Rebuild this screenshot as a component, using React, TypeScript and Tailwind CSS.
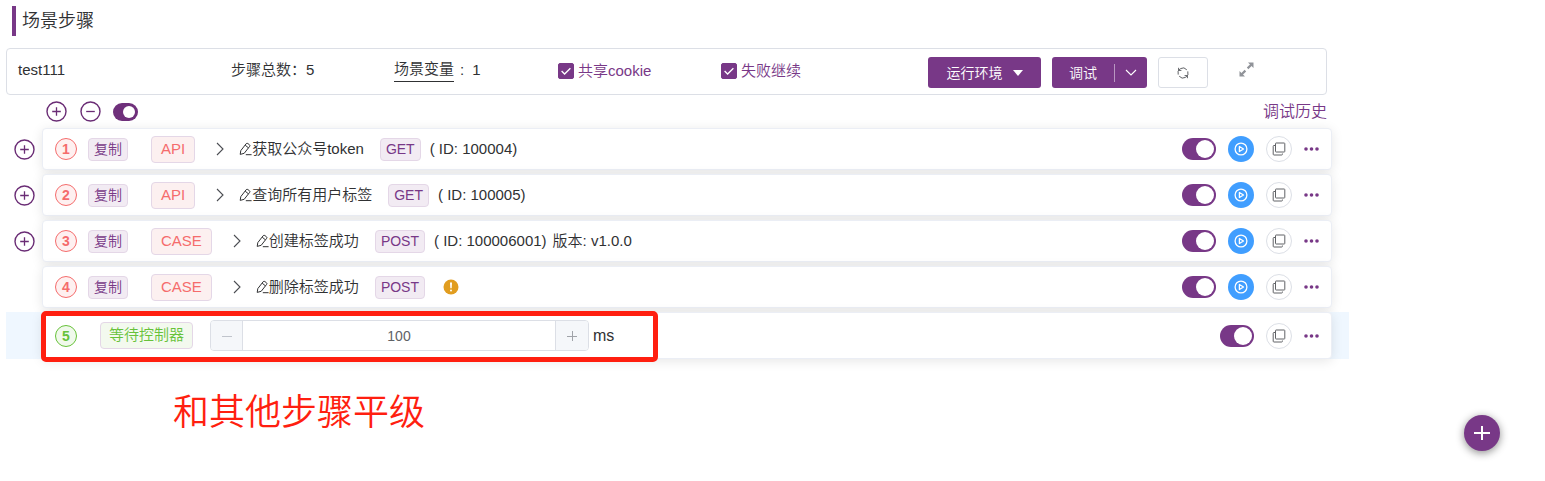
import { useState } from "react";

type Step = {
  id: number;
  kind: "API" | "CASE";
  name: string;
  method: "GET" | "POST";
  ref?: string;
  version?: string;
  insertable: boolean;
};

const STEPS: Step[] = [
  { id: 1, kind: "API", name: "获取公众号token", method: "GET", ref: "100004", insertable: true },
  { id: 2, kind: "API", name: "查询所有用户标签", method: "GET", ref: "100005", insertable: true },
  { id: 3, kind: "CASE", name: "创建标签成功", method: "POST", ref: "100006001", version: "v1.0.0", insertable: true },
  { id: 4, kind: "CASE", name: "删除标签成功", method: "POST", insertable: false },
];

function CircleIcon({ minus = false }: { minus?: boolean }) {
  return (
    <svg viewBox="0 0 21 21" className="size-[21px]" fill="none" stroke="#6a2c75">
      <circle cx="10.5" cy="10.5" r="9.5" strokeWidth="1.4" />
      <path d={minus ? "M6.2 10.5h8.6" : "M6.2 10.5h8.6M10.5 6.2v8.6"} strokeWidth="1.3" />
    </svg>
  );
}

function PencilIcon() {
  return (
    <svg viewBox="0 0 13 14" className="h-[14px] w-[13px] shrink-0" fill="none" stroke="#303133" strokeWidth="1">
      <path d="M1.2 12.4 1.8 8.6 7.2 1.7Q7.9 .9 8.8 1.5L10.5 2.8Q11.3 3.5 10.7 4.3L5.2 11.3 1.2 12.4ZM6.2 3.2 9.4 5.8M6.8 12.7H12.6" />
    </svg>
  );
}

function ChevronIcon() {
  return (
    <svg viewBox="0 0 8 14" className="h-[14px] w-2" fill="none" stroke="#4b4d52" strokeWidth="1.1">
      <path d="M1 1 7 7 1 13" />
    </svg>
  );
}

function PlayIcon() {
  return (
    <svg viewBox="0 0 14 14" className="size-[14px]" fill="none" stroke="white" strokeWidth="1.3">
      <circle cx="7" cy="7" r="5.9" />
      <path d="M5.4 4.5v5L9.5 7z" strokeLinejoin="round" />
    </svg>
  );
}

function CopyIcon() {
  return (
    <svg viewBox="0 0 14 14" className="size-[14px]" fill="none" stroke="#606266" strokeWidth="1">
      <rect x="3.5" y="1" width="9.3" height="9" rx="0.6" />
      <path d="M3.2 3.5H2Q1.2 3.5 1.2 4.3V12.3Q1.2 13 2 13H9.7Q10.4 13 10.4 12.3V11.5" />
    </svg>
  );
}

function Switch({ label, small = false }: { label: string; small?: boolean }) {
  return (
    <input
      type="checkbox"
      role="switch"
      aria-label={label}
      defaultChecked
      className={
        small
          ? "flex h-[18px] w-[25px] shrink-0 cursor-pointer appearance-none items-center justify-start rounded-full bg-gray-300 px-[3px] before:block before:size-3 before:rounded-full before:bg-white checked:justify-end checked:bg-[#6f307b]"
          : "flex h-[22px] w-[34px] shrink-0 cursor-pointer appearance-none items-center justify-start rounded-full bg-gray-300 px-[2px] before:block before:size-[18px] before:rounded-full before:bg-white checked:justify-end checked:bg-[#783887]"
      }
    />
  );
}

function CheckOption({ label }: { label: string }) {
  return (
    <label className="flex items-center gap-1 pt-px text-[#783887]">
      <span className="grid">
        <input
          type="checkbox"
          defaultChecked
          className="col-start-1 row-start-1 size-4 appearance-none rounded-xs border border-[#783887] bg-white checked:bg-[#783887]"
        />
        <svg
          viewBox="0 0 16 16"
          className="pointer-events-none col-start-1 row-start-1 size-4"
          fill="none"
          stroke="white"
          strokeWidth="1.3"
        >
          <path d="M3.6 8 6.6 11 12.4 5.2" />
        </svg>
      </span>
      {label}
    </label>
  );
}

function RowActions({ id, runnable }: { id: number; runnable: boolean }) {
  return (
    <div className="ml-auto flex items-center gap-3">
      <Switch label={`步骤 ${id}`} />
      {runnable && (
        <button
          type="button"
          aria-label="运行"
          className="flex size-[26px] items-center justify-center rounded-full bg-[#409eff]"
        >
          <PlayIcon />
        </button>
      )}
      <button
        type="button"
        aria-label="复制步骤"
        className="flex size-[26px] items-center justify-center rounded-full border border-[#dcdfe6] bg-white"
      >
        <CopyIcon />
      </button>
      <button type="button" aria-label="更多" className="w-[15px]">
        <svg viewBox="0 0 15 4" className="h-1 w-[15px]" fill="#783887">
          <circle cx="2" cy="2" r="1.8" />
          <circle cx="7.5" cy="2" r="1.8" />
          <circle cx="13" cy="2" r="1.8" />
        </svg>
      </button>
    </div>
  );
}

const CARD = "flex min-w-0 flex-1 rounded border border-[#ebeef5] bg-white px-3 shadow-[0_2px_12px_rgba(0,0,0,0.1)]";
const PURPLE_TAG = "flex h-[23px] items-center rounded border border-[#e4d7e7] bg-[#f2ebf3] px-[5px] text-sm text-[#783887]";

function StepRow({ step }: { step: Step }) {
  return (
    <li className="flex pr-[17px]">
      <div className="flex w-9 shrink-0 items-center pl-2">
        {step.insertable && (
          <button type="button" aria-label="插入步骤">
            <CircleIcon />
          </button>
        )}
      </div>
      <div className={`${CARD} h-[42px] items-center`}>
        <span className="flex size-[22px] items-center justify-center rounded-full border border-[#f56c6c] bg-[#fef0f0] text-sm font-bold text-[#f56c6c]">
          {step.id}
        </span>
        <span className={`${PURPLE_TAG} ml-[11px]`}>复制</span>
        <span className="ml-[23px] flex h-[27px] items-center rounded border border-[#e4d7e7] bg-[#fcf0f0] px-[9px] text-[#f56c6c]">
          {step.kind}
        </span>
        <button type="button" aria-label="展开" className="ml-[21px]">
          <ChevronIcon />
        </button>
        <span className="ml-[15px] flex items-center whitespace-nowrap">
          <PencilIcon />
          {step.name}
        </span>
        <span className={`${PURPLE_TAG} ml-4`}>{step.method}</span>
        {step.ref ? (
          <span className="ml-[9px] whitespace-nowrap">( ID: {step.ref})</span>
        ) : (
          <svg viewBox="0 0 16 16" className="ml-[18px] size-4" role="img" aria-label="警告">
            <circle cx="8" cy="8" r="7.5" fill="#e19d1f" />
            <path d="M7 3.4h2l-.3 5.8H7.3z" fill="white" />
            <circle cx="8" cy="11.6" r="1" fill="white" />
          </svg>
        )}
        {step.version && <span className="ml-[6px] whitespace-nowrap">版本: {step.version}</span>}
        <RowActions id={step.id} runnable />
      </div>
    </li>
  );
}

function WaitRow() {
  const [wait, setWait] = useState(100);
  return (
    <li className="relative flex bg-[#eff7ff] pr-[17px] pl-9">
      <div className={`${CARD} h-[47px] items-center`}>
        <span className="flex size-[22px] items-center justify-center rounded-full border border-[#67c23a] bg-[#f0f9eb] text-sm font-bold text-[#67c23a]">
          5
        </span>
        <span className="ml-[23px] flex h-[27px] items-center rounded border border-[#e4d7e7] bg-[#f3f9ee] px-2 text-[#67c23a]">
          等待控制器
        </span>
        <div className="ml-[17px] flex h-[31px] w-[379px] overflow-hidden rounded border border-[#dcdfe6] text-sm text-[#606266]">
          <button
            type="button"
            aria-label="减少"
            onClick={() => setWait(Math.max(0, wait - 1))}
            className="flex w-8 items-center justify-center border-r border-[#dcdfe6] bg-[#f5f7fa]"
          >
            <svg viewBox="0 0 10 10" className="size-[10px]" stroke="#c0c4cc">
              <path d="M0 5.5h10" />
            </svg>
          </button>
          <input
            aria-label="等待时间"
            value={wait}
            onChange={(e) => setWait(Number(e.target.value) || 0)}
            className="min-w-0 flex-1 bg-white text-center outline-none"
          />
          <button
            type="button"
            aria-label="增加"
            onClick={() => setWait(wait + 1)}
            className="flex w-[33px] items-center justify-center border-l border-[#dcdfe6] bg-[#f5f7fa]"
          >
            <svg viewBox="0 0 10 10" className="size-[10px]" stroke="#a0a3a9">
              <path d="M0 5.5h10M5.5 0v10" />
            </svg>
          </button>
        </div>
        <span className="ml-1 text-base">ms</span>
        <RowActions id={5} runnable={false} />
      </div>
      <div className="pointer-events-none absolute -top-px left-[35px] h-[51px] w-[617px] rounded-[5px] border-5 border-[#ff1f10]" />
    </li>
  );
}

export default function App() {
  return (
    <main className="min-h-screen bg-white pt-[6px] pl-[6px] font-['Liberation_Sans','Noto_Sans_CJK_SC',sans-serif] text-[15px] font-[350] text-[#303133]">
      <div className="pr-[196px]">
        <h1 className="ml-[6px] flex h-[30px] items-center border-l-4 border-[#783887] pl-[6px] text-lg font-[350]">
          场景步骤
        </h1>

        <header className="mt-3 mr-[22px] grid h-[47px] grid-cols-[213fr_163fr_164fr_163fr_207fr_398fr] items-start rounded border border-[#dcdfe6] pt-2 pl-[11px] leading-[26px] whitespace-nowrap">
          <span>test111</span>
          <span>步骤总数：5</span>
          <span className="flex items-start">
            <span className="border-b border-[#303133] leading-6">场景变量</span>
            <span className="ml-[6px]">:</span>
            <span className="ml-2">1</span>
          </span>
          <CheckOption label="共享cookie" />
          <CheckOption label="失败继续" />
          <div className="flex items-start gap-[11px] text-sm text-white">
            <button
              type="button"
              className="flex h-[31px] w-[113px] items-center justify-center gap-[10px] rounded-[3px] bg-[#783887]"
            >
              运行环境
              <svg viewBox="0 0 10 6" className="h-[6px] w-[10px]" fill="white">
                <path d="M0 0h10L5 6z" />
              </svg>
            </button>
            <div className="flex h-[31px] items-center rounded-[3px] bg-[#783887]">
              <button type="button" className="w-[62px]">
                调试
              </button>
              <button
                type="button"
                aria-label="调试选项"
                className="flex h-[18px] w-[33px] items-center justify-center border-l border-[#b996c1]"
              >
                <svg viewBox="0 0 12 7" className="h-[7px] w-3" fill="none" stroke="white" strokeWidth="1.1">
                  <path d="M1 1 6 6 11 1" />
                </svg>
              </button>
            </div>
            <button
              type="button"
              aria-label="刷新"
              className="flex h-[31px] w-[50px] items-center justify-center rounded-[3px] border border-[#dcdfe6] bg-white"
            >
              <svg viewBox="0 0 12 12" className="size-3" fill="none" stroke="#606266" strokeWidth="1">
                <path d="M1.2 7.6A5 5 0 0 1 9.8 2.8M1.6 .8V3.4H4.4M10.8 4.4A5 5 0 0 1 2.2 9.2M10.4 11.2V8.6H7.6" />
              </svg>
            </button>
            <button type="button" aria-label="全屏" className="ml-5 flex h-6 items-center">
              <svg viewBox="0 0 15 15" className="size-[15px]" fill="#909399" stroke="#909399">
                <path d="M9 .5h5.5V6zM.5 9v5.5H6z" stroke="none" />
                <path d="M8.6 6.4 12.5 2.5M2.5 12.5 6.4 8.6" strokeWidth="2.2" />
              </svg>
            </button>
          </div>
        </header>

        <div className="mr-[22px] flex h-[33px] items-center pl-10">
          <button type="button" aria-label="全部展开">
            <CircleIcon />
          </button>
          <button type="button" aria-label="全部收起" className="mr-3 ml-[13px]">
            <CircleIcon minus />
          </button>
          <Switch label="全部启用" small />
          <a href="#history" className="ml-auto text-base leading-6 text-[#783887]">
            调试历史
          </a>
        </div>

        <ul className="flex flex-col gap-1">
          {STEPS.map((step) => (
            <StepRow key={step.id} step={step} />
          ))}
          <WaitRow />
        </ul>
      </div>

      <p className="mt-[30px] ml-[167px] text-4xl leading-[48px] text-[#ff1f10]">和其他步骤平级</p>

      <button
        type="button"
        aria-label="添加步骤"
        className="fixed right-[45px] bottom-[30px] flex size-9 items-center justify-center rounded-full bg-[#783887] shadow-[0_2px_8px_rgba(0,0,0,0.45)]"
      >
        <svg viewBox="0 0 16 16" className="size-4" stroke="white" strokeWidth="2">
          <path d="M0 8h16M8 1v14" />
        </svg>
      </button>
    </main>
  );
}
